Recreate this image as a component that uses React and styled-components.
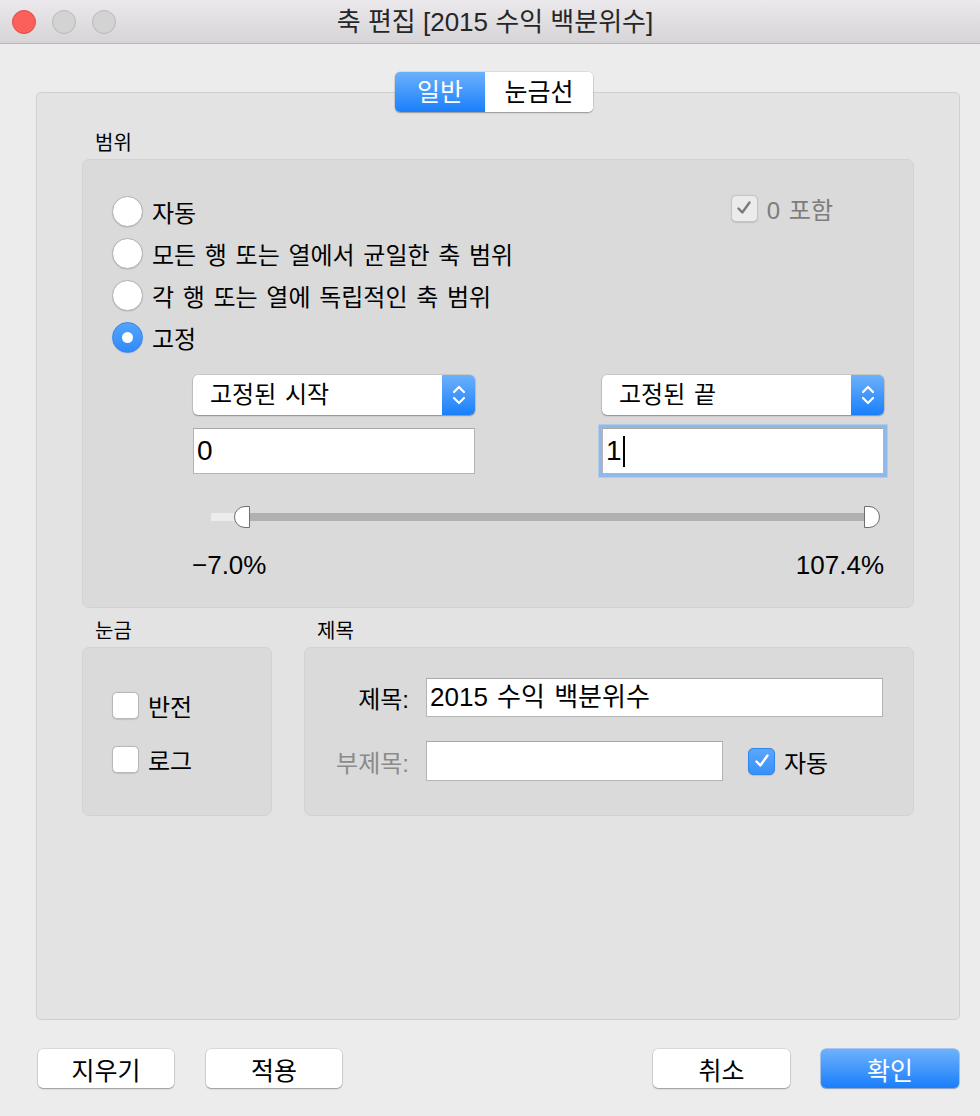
import React from "react";
import styled, { createGlobalStyle, css } from "styled-components";

const GlobalStyle = createGlobalStyle`
  html, body {
    margin: 0;
    padding: 0;
    background: #ececec;
  }
  body {
    font-family: "Liberation Sans", "Noto Sans CJK KR", sans-serif;
    color: #000;
    -webkit-font-smoothing: antialiased;
  }
  * { box-sizing: border-box; }
`;

const blueFill = css`
  background: linear-gradient(#6cb1fb, #1a7ffb);
`;

const Window = styled.div`
  width: 980px;
  height: 1116px;
  display: flex;
  flex-direction: column;
  background: #ececec;
  overflow: hidden;
`;

const TitleBar = styled.header`
  height: 44px;
  flex: none;
  display: grid;
  grid-template-columns: 1fr auto 1fr;
  align-items: center;
  padding: 0 12px;
  background: linear-gradient(#ebe9eb, #d6d4d6);
  border-bottom: 1px solid #b9b7b9;
`;

const Lights = styled.div`
  display: flex;
  gap: 16px;
`;

const Light = styled.span`
  width: 24px;
  height: 24px;
  border-radius: 50%;
  background: ${(p) => p.$fill};
  border: 1px solid ${(p) => p.$edge};
`;

const Title = styled.h1`
  margin: 0;
  font-size: 26px;
  line-height: 44px;
  font-weight: 400;
  color: #262626;
  padding-left: 10px;
`;

const Body = styled.main`
  flex: 1;
  display: flex;
  flex-direction: column;
  padding: 48px 20px 0 36px;
`;

const TabBox = styled.section`
  height: 928px;
  flex: none;
  border: 1px solid #d0d0d0;
  border-radius: 5px;
  background: #e3e3e3;
  display: flex;
  flex-direction: column;
`;

const TabStrip = styled.div`
  margin-top: -21px;
  display: flex;
  justify-content: center;
  padding-right: 8px;
`;

const Segmented = styled.div`
  display: flex;
  height: 40px;
  border-radius: 5px;
  overflow: hidden;
  background: #fff;
  box-shadow: 0 1px 1.5px rgba(0, 0, 0, 0.3), 0 0 0 0.5px rgba(0, 0, 0, 0.12);
`;

const Segment = styled.button`
  border: 0;
  margin: 0;
  padding: 0;
  width: ${(p) => p.$w}px;
  font: inherit;
  font-size: 25px;
  line-height: 40px;
  color: #000;
  background: #fff;
  ${(p) =>
    p.$active &&
    css`
      ${blueFill};
      color: #fff;
    `}
`;

const TabContent = styled.div`
  padding: 0 45px;
  display: flex;
  flex-direction: column;
`;

const SectionLabel = styled.div`
  font-size: 20px;
  line-height: 24px;
  margin: ${(p) => p.$top || 0}px 0 4px 13px;
`;

const Group = styled.div`
  background: #dadada;
  border: 1px solid #d2d2d2;
  border-radius: 7px;
  height: ${(p) => p.$h}px;
`;

const RangeGroup = styled(Group)`
  padding: 30px 29px 0 29px;
  display: flex;
  flex-direction: column;
`;

const RadioTop = styled.div`
  display: flex;
  justify-content: space-between;
  align-items: flex-start;
`;

const RadioList = styled.div`
  display: flex;
  flex-direction: column;
`;

const OptionRow = styled.label`
  display: flex;
  align-items: center;
  gap: 9px;
  height: ${(p) => p.$h || 42}px;
  font-size: 24px;
  word-spacing: 2px;
  color: ${(p) => (p.$muted ? "#7d7d7d" : "#000")};
  white-space: nowrap;
`;

const RadioDot = styled.span`
  width: 31px;
  height: 31px;
  flex: none;
  border-radius: 50%;
  background: #fff;
  border: 1px solid #b3b3b3;
  box-shadow: 0 0.5px 1px rgba(0, 0, 0, 0.15);
  display: flex;
  align-items: center;
  justify-content: center;
  ${(p) =>
    p.$on &&
    css`
      background: linear-gradient(#55a3fb, #2f8bf9);
      border-color: #2f86ee;
      &::after {
        content: "";
        width: 11px;
        height: 11px;
        border-radius: 50%;
        background: #fff;
      }
    `}
`;

const Box = styled.span`
  width: 27px;
  height: 27px;
  flex: none;
  border-radius: 5px;
  display: flex;
  align-items: center;
  justify-content: center;
  background: #fff;
  border: 1px solid #b8b8b8;
  box-shadow: 0 0.5px 1px rgba(0, 0, 0, 0.12);
  ${(p) =>
    p.$variant === "blue" &&
    css`
      background: linear-gradient(#5aa6fb, #3791f9);
      border-color: #3186ec;
    `}
  ${(p) =>
    p.$variant === "disabled" &&
    css`
      background: #ebebeb;
      border-color: #c4c4c4;
    `}
`;

const Check = ({ color }) => (
  <svg width="18" height="18" viewBox="0 0 18 18">
    <path
      d="M3.5 9.5 L7.3 13.5 L14.5 3.5"
      fill="none"
      stroke={color}
      strokeWidth="2.4"
      strokeLinecap="round"
      strokeLinejoin="round"
    />
  </svg>
);

const CheckOption = ({ variant, children, muted, h, gap }) => (
  <OptionRow $muted={muted} $h={h} style={gap ? { gap } : undefined}>
    <Box $variant={variant}>
      {variant === "blue" && <Check color="#fff" />}
      {variant === "disabled" && <Check color="#7a7a7a" />}
    </Box>
    {children}
  </OptionRow>
);

const IncludeZero = styled.div`
  margin-top: 3px;
  margin-right: 51px;
`;

const FieldGrid = styled.div`
  display: grid;
  grid-template-columns: 282px 282px;
  justify-content: space-between;
  row-gap: 13px;
  margin: 17px 0 0 81px;
`;

const Select = styled.div`
  height: 40px;
  display: flex;
  border-radius: 5px;
  overflow: hidden;
  background: #fff;
  box-shadow: 0 1px 1.5px rgba(0, 0, 0, 0.3), 0 0 0 0.5px rgba(0, 0, 0, 0.15);
`;

const SelectText = styled.span`
  flex: 1;
  padding-left: 17px;
  font-size: 24px;
  line-height: 40px;
  word-spacing: 2px;
`;

const Stepper = styled.span`
  width: 33px;
  ${blueFill};
  display: flex;
  align-items: center;
  justify-content: center;
`;

const Chevrons = () => (
  <svg width="16" height="26" viewBox="0 0 16 26">
    <path
      d="M3 10 L8 5 L13 10 M3 16 L8 21 L13 16"
      fill="none"
      stroke="#fff"
      strokeWidth="2.2"
      strokeLinecap="round"
      strokeLinejoin="round"
    />
  </svg>
);

const TextField = styled.div`
  height: ${(p) => p.$h || 46}px;
  width: ${(p) => (p.$w ? `${p.$w}px` : "auto")};
  background: #fff;
  border: 1px solid #b4b4b4;
  border-top-color: #a8a8a8;
  font-size: ${(p) => p.$fs || 28}px;
  line-height: ${(p) => (p.$h || 46) - 2}px;
  padding-left: 3px;
  word-spacing: 2px;
  white-space: nowrap;
  display: flex;
  align-items: center;
  ${(p) =>
    p.$focused &&
    css`
      box-shadow: 0 0 0 3.5px #8fb9ec;
    `}
`;

const Caret = styled.span`
  display: inline-block;
  width: 2px;
  height: 31px;
  background: #000;
  margin-left: 1px;
`;

const Slider = styled.div`
  position: relative;
  height: 22px;
  margin: 32px 4px 0 99px;
  display: flex;
  align-items: center;
`;

const TrackLight = styled.span`
  width: 29px;
  height: 8px;
  background: #ececec;
`;

const TrackDark = styled.span`
  flex: 1;
  height: 8px;
  margin-right: 8px;
  background: #b1b1b1;
`;

const Handle = styled.span`
  position: absolute;
  top: 0;
  width: 16px;
  height: 22px;
  background: #fff;
  border: 1.5px solid #6e6e6e;
  ${(p) =>
    p.$side === "left"
      ? css`
          border-radius: 11px 0 0 11px;
        `
      : css`
          border-radius: 0 11px 11px 0;
        `}
`;

const SliderLabels = styled.div`
  display: flex;
  justify-content: space-between;
  margin: 23px 0 0 80px;
  font-size: 26px;
  line-height: 28px;
`;

const LowerRow = styled.div`
  display: grid;
  grid-template-columns: 190px 1fr;
  column-gap: 32px;
`;

const Column = styled.div`
  display: flex;
  flex-direction: column;
`;

const TickGroup = styled(Group)`
  padding: 30px 29px 0;
  display: flex;
  flex-direction: column;
`;

const TitleGroup = styled(Group)`
  padding: 30px 30px 0 13px;
  display: grid;
  grid-template-columns: 91px 1fr;
  column-gap: 17px;
  row-gap: 24px;
  align-content: start;
  align-items: center;
`;

const FieldLabel = styled.span`
  text-align: right;
  font-size: 24px;
  color: ${(p) => (p.$muted ? "#8a8a8a" : "#000")};
`;

const SubRow = styled.div`
  display: flex;
  align-items: center;
  gap: 25px;
`;

const ButtonBar = styled.div`
  display: flex;
  justify-content: space-between;
  margin: 29px 1px 0 2px;
`;

const ButtonGroup = styled.div`
  display: flex;
  gap: ${(p) => p.$gap}px;
`;

const Button = styled.button`
  width: ${(p) => p.$w || 137}px;
  height: 39px;
  margin: 0;
  padding: 0;
  border: 0;
  border-radius: 5px;
  font: inherit;
  font-size: 25px;
  color: #000;
  background: #fff;
  box-shadow: 0 1px 1.5px rgba(0, 0, 0, 0.3), 0 0 0 0.5px rgba(0, 0, 0, 0.15);
  ${(p) =>
    p.$primary &&
    css`
      background: linear-gradient(#6db2fb, #1a7efb);
      color: #fff;
      box-shadow: 0 1px 1.5px rgba(0, 0, 0, 0.2), 0 0 0 0.5px rgba(26, 110, 240, 0.6);
    `}
`;

const radios = [
  { label: "자동", on: false },
  { label: "모든 행 또는 열에서 균일한 축 범위", on: false },
  { label: "각 행 또는 열에 독립적인 축 범위", on: false },
  { label: "고정", on: true },
];

export default function App() {
  return (
    <>
      <GlobalStyle />
      <Window>
        <TitleBar>
          <Lights>
            <Light $fill="#fc605b" $edge="#de4c46" />
            <Light $fill="#d4d3d4" $edge="#bab9ba" />
            <Light $fill="#d4d3d4" $edge="#bab9ba" />
          </Lights>
          <Title>축 편집 [2015 수익 백분위수]</Title>
          <span />
        </TitleBar>

        <Body>
          <TabBox>
            <TabStrip>
              <Segmented>
                <Segment $w={90} $active>
                  일반
                </Segment>
                <Segment $w={108}>눈금선</Segment>
              </Segmented>
            </TabStrip>

            <TabContent>
              <SectionLabel $top={19}>범위</SectionLabel>
              <RangeGroup $h={449}>
                <RadioTop>
                  <RadioList>
                    {radios.map((r) => (
                      <OptionRow key={r.label}>
                        <RadioDot $on={r.on} />
                        {r.label}
                      </OptionRow>
                    ))}
                  </RadioList>
                  <IncludeZero>
                    <CheckOption variant="disabled" muted h={30}>
                      0 포함
                    </CheckOption>
                  </IncludeZero>
                </RadioTop>

                <FieldGrid>
                  <Select>
                    <SelectText>고정된 시작</SelectText>
                    <Stepper>
                      <Chevrons />
                    </Stepper>
                  </Select>
                  <Select>
                    <SelectText>고정된 끝</SelectText>
                    <Stepper>
                      <Chevrons />
                    </Stepper>
                  </Select>
                  <TextField>0</TextField>
                  <TextField $focused>
                    1<Caret />
                  </TextField>
                </FieldGrid>

                <Slider>
                  <TrackLight />
                  <TrackDark />
                  <Handle $side="left" style={{ left: 23 }} />
                  <Handle $side="right" style={{ right: 0 }} />
                </Slider>

                <SliderLabels>
                  <span>−7.0%</span>
                  <span>107.4%</span>
                </SliderLabels>
              </RangeGroup>

              <LowerRow>
                <Column>
                  <SectionLabel $top={11}>눈금</SectionLabel>
                  <TickGroup $h={169}>
                    <CheckOption h={54} gap={9}>
                      반전
                    </CheckOption>
                    <CheckOption h={54} gap={9}>
                      로그
                    </CheckOption>
                  </TickGroup>
                </Column>
                <Column>
                  <SectionLabel $top={11}>제목</SectionLabel>
                  <TitleGroup $h={169}>
                    <FieldLabel>제목:</FieldLabel>
                    <TextField $h={39} $fs={26}>
                      2015 수익 백분위수
                    </TextField>
                    <FieldLabel $muted>부제목:</FieldLabel>
                    <SubRow>
                      <TextField $h={40} $w={297} />
                      <CheckOption variant="blue" gap={9} h={30}>
                        자동
                      </CheckOption>
                    </SubRow>
                  </TitleGroup>
                </Column>
              </LowerRow>
            </TabContent>
          </TabBox>

          <ButtonBar>
            <ButtonGroup $gap={32}>
              <Button $w={136}>지우기</Button>
              <Button $w={136}>적용</Button>
            </ButtonGroup>
            <ButtonGroup $gap={31}>
              <Button $w={137}>취소</Button>
              <Button $w={138} $primary>
                확인
              </Button>
            </ButtonGroup>
          </ButtonBar>
        </Body>
      </Window>
    </>
  );
}
